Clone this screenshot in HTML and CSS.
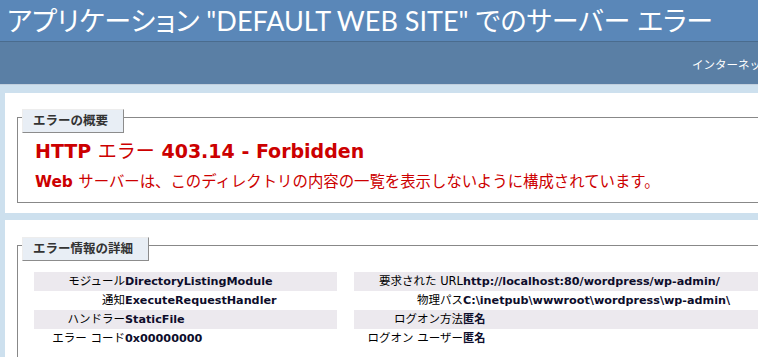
FILE: index.html
```html
<!DOCTYPE html>
<html lang="ja">
<head>
    <meta charset="UTF-8">
    <title>IIS 8.0 詳細エラー - 403.14 - Forbidden</title>
    <link rel="stylesheet" href="styles.css">
</head>
<body>
    <div class="page">
        <div id="header">
            <h1>アプリケーション "DEFAULT WEB SITE" でのサーバー エラー</h1>
        </div>
        <div id="server_version">
            <p>インターネット インフォメーション サービス 8.0</p>
        </div>

        <div id="content">
            <div class="summary-container">
                <div class="fieldset">
                    <div class="legend">エラーの概要</div>
                    <h2>HTTP <span class="jp">エラー</span> 403.14 - Forbidden</h2>
                    <h3>Web <span class="jp">サーバーは、このディレクトリの内容の一覧を表示しないように構成されています。</span></h3>
                </div>
            </div>

            <div class="content-container">
                <div class="fieldset">
                    <div class="legend">エラー情報の詳細</div>
                    <div class="details">
                        <table id="details-left">
                            <tr class="alt"><th>モジュール</th><td>DirectoryListingModule</td></tr>
                            <tr><th>通知</th><td>ExecuteRequestHandler</td></tr>
                            <tr class="alt"><th>ハンドラー</th><td>StaticFile</td></tr>
                            <tr><th>エラー コード</th><td>0x00000000</td></tr>
                        </table>
                        <table id="details-right">
                            <tr class="alt"><th>要求された URL</th><td>http://localhost:80/wordpress/wp-admin/</td></tr>
                            <tr><th>物理パス</th><td>C:\inetpub\wwwroot\wordpress\wp-admin\</td></tr>
                            <tr class="alt"><th>ログオン方法</th><td>匿名</td></tr>
                            <tr><th>ログオン ユーザー</th><td>匿名</td></tr>
                        </table>
                    </div>
                </div>
            </div>
        </div>
    </div>
</body>
</html>
```

FILE: styles.css
```css
body {
    margin: 0;
    font-size: 11.2px;
    font-family: "DejaVu Sans", "Noto Sans CJK JP", sans-serif;
    background: #cde0ee;
    overflow: hidden;
}

.page {
    width: 1100px;
}

#header {
    padding: 6px 7px;
    height: 29px;
    color: #fff;
    background-color: #5a87b8;
}

h1 {
    margin: 0;
    font-family: Lato, "Noto Sans CJK JP", sans-serif;
    font-size: 27px;
    font-weight: normal;
    line-height: 29px;
    font-feature-settings: "palt";
    white-space: nowrap;
}

#server_version {
    height: 44px;
    box-sizing: border-box;
    padding: 16px 0 0 692px;
    color: #fff;
    background-color: #5a7fa5;
    border-top: 1px solid #4a6c8e;
    border-bottom: 1px solid #c1cfdd;
}

#server_version p {
    margin: 0;
    font-family: "Noto Sans CJK JP", sans-serif;
    font-size: 11.5px;
    line-height: 13px;
    white-space: nowrap;
}

#content {
    margin-left: 5px;
}

.summary-container,
.content-container {
    background: #fff;
    padding: 24px 0 10px 12px;
}

.summary-container {
    margin-top: 8px;
}

.content-container {
    margin-top: 7px;
    padding-top: 25px;
}

.fieldset {
    border: 1px solid #888;
    padding: 0 0 10px 16px;
}

.legend {
    width: fit-content;
    margin: -9px 0 0 -12px;
    padding: 4px 15px 4px 10px;
    line-height: 14px;
    font-size: 12.5px;
    font-weight: bold;
    color: #333;
    background: #e8eef5;
    border-top: 1px solid #ededed;
    border-left: 1px solid #ededed;
    border-right: 1px solid #8c8c8c;
    border-bottom: 1px solid #8c8c8c;
}

h2 {
    margin: 7px 0 0 1px;
    font-size: 19px;
    line-height: 23px;
    color: #cc0000;
    white-space: nowrap;
}

h3 {
    margin: 9px 0 0 1px;
    font-size: 15.4px;
    line-height: 20px;
    color: #cc0000;
    white-space: nowrap;
}

.jp {
    font-weight: normal;
}

.details {
    display: flex;
    gap: 17px;
    margin-top: 11px;
}

table {
    border-collapse: collapse;
    border: none;
}

#details-left {
    width: 303px;
    flex: none;
}

#details-right {
    flex: 1;
}

th, td {
    height: 19px;
    padding: 0;
    line-height: 19px;
    vertical-align: top;
    white-space: nowrap;
}

th {
    text-align: right;
    font-weight: normal;
    font-size: 11.5px;
    color: #000;
}

#details-left th {
    width: 91px;
}

#details-right th {
    width: 109px;
}

td {
    text-align: left;
    font-weight: bold;
    color: #0d0d2b;
}

tr.alt th,
tr.alt td {
    background-color: #ece9ee;
}
```
